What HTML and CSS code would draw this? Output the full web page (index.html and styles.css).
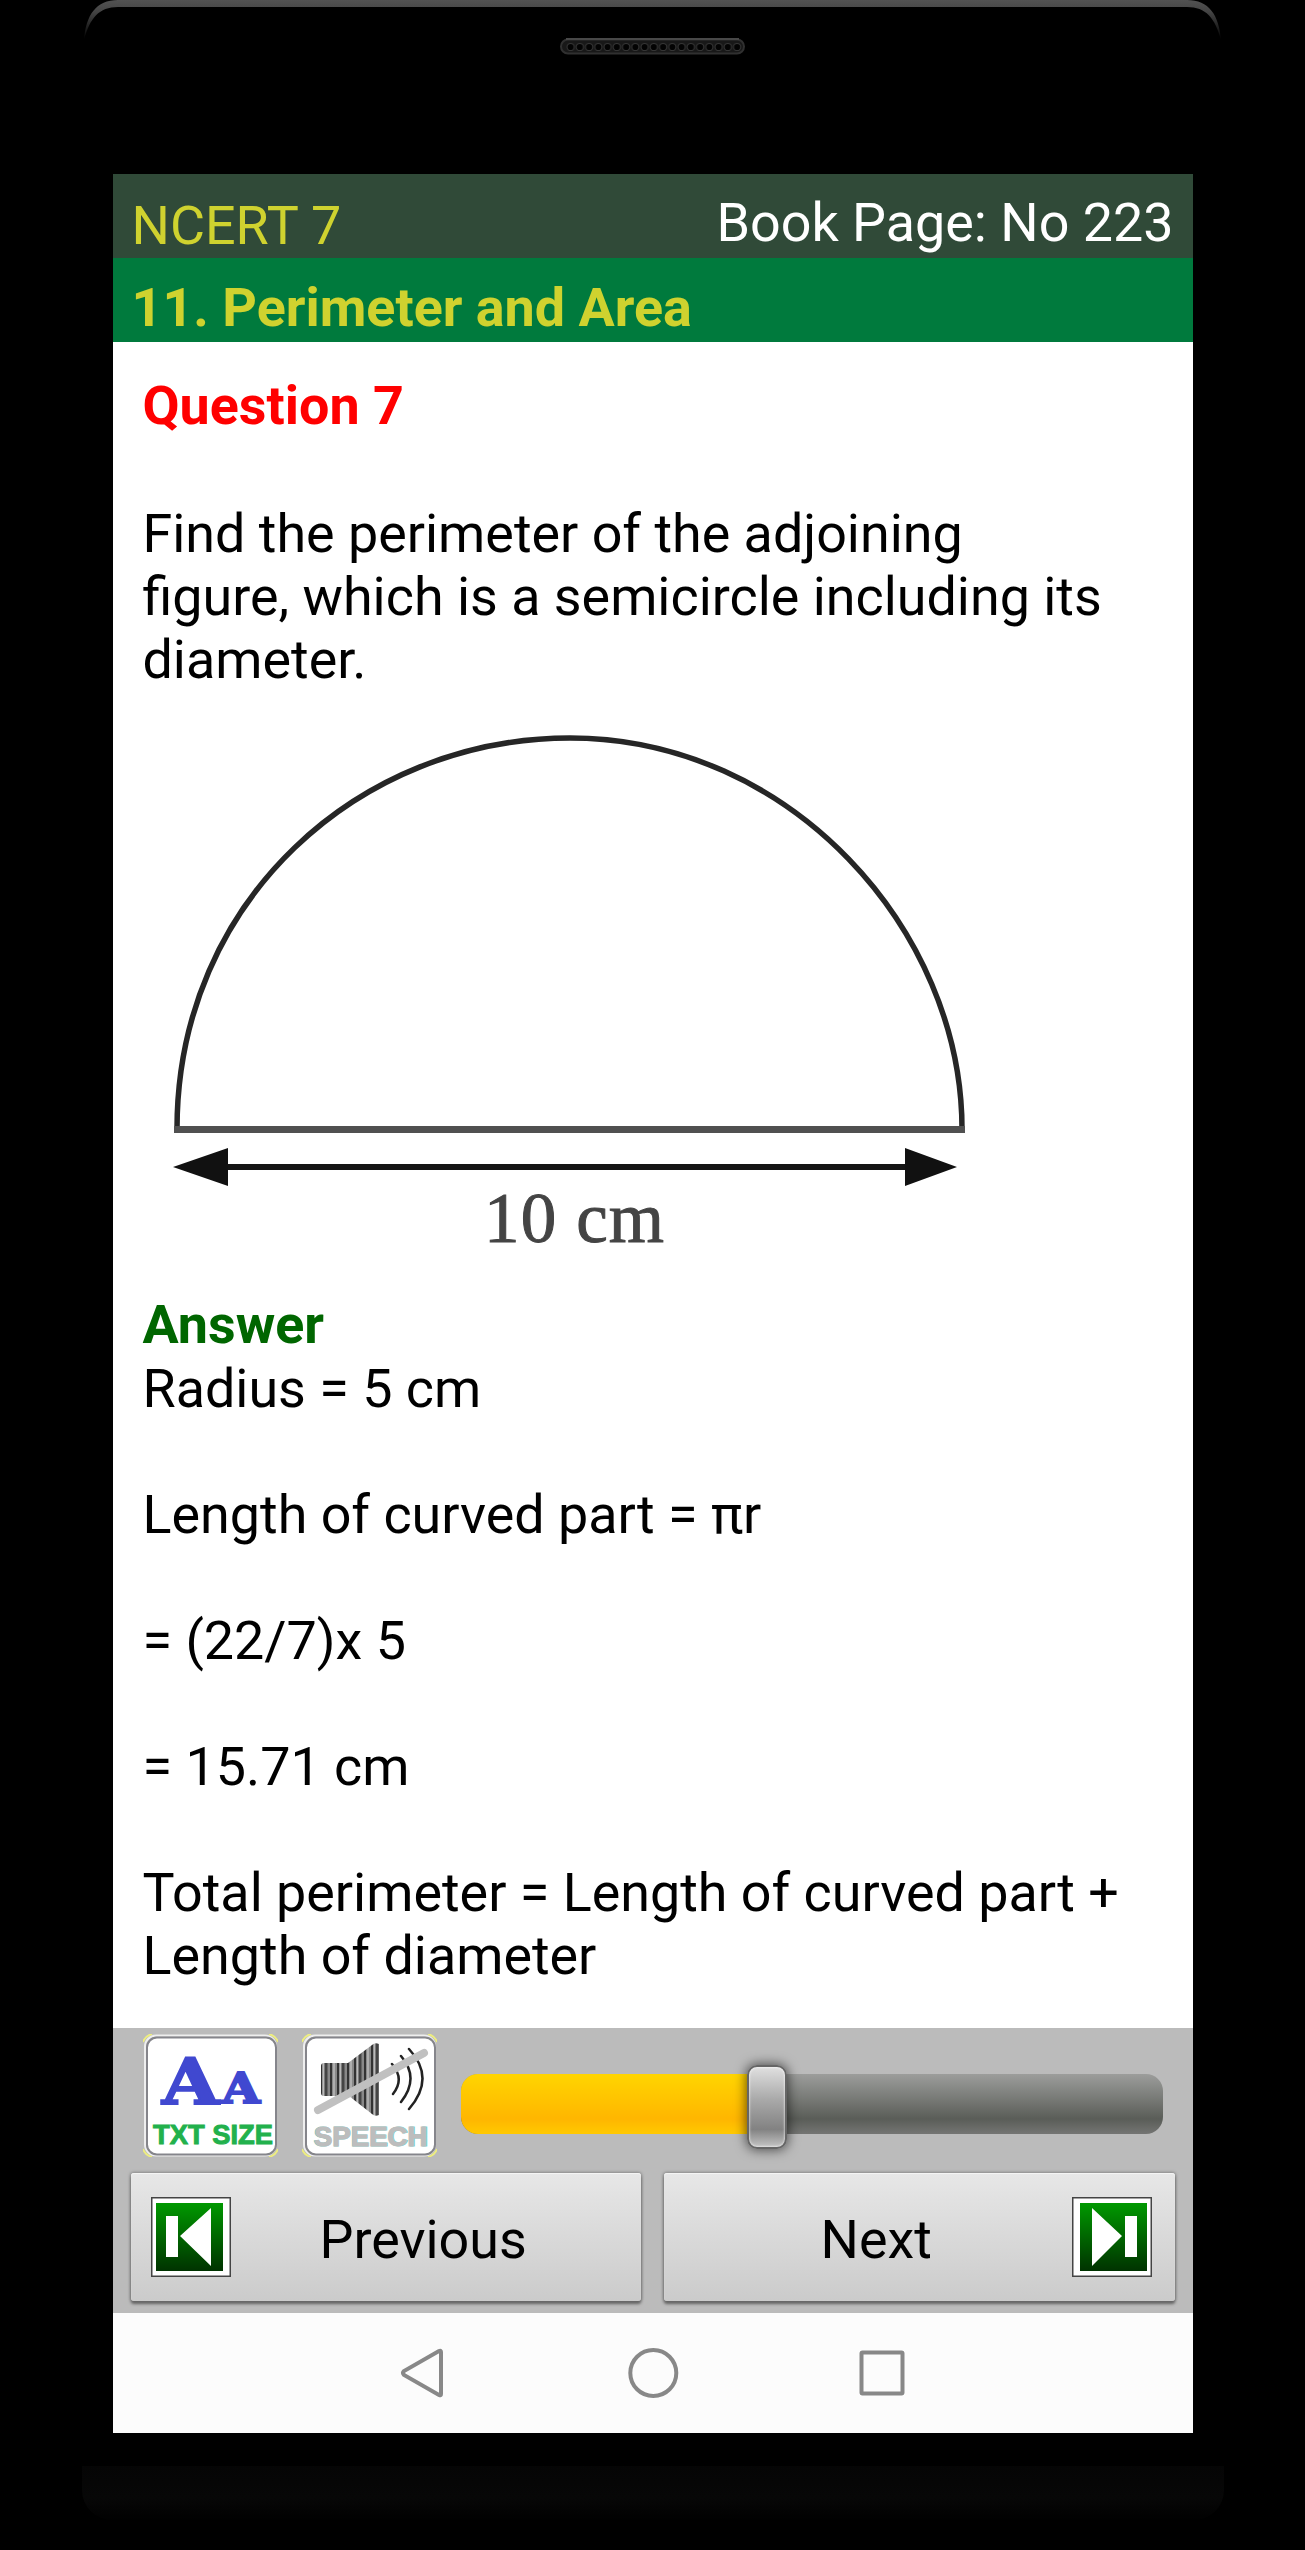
FILE: index.html
```html
<!DOCTYPE html>
<html lang="en">
<head>
<meta charset="utf-8">
<title>NCERT 7</title>
<link rel="stylesheet" href="styles.css">
</head>
<body>
<div class="phone">
  <header class="bezel-top">
    <svg width="1305" height="174" viewBox="0 0 1305 174">
      <defs>
        <linearGradient id="rim" x1="0" y1="0" x2="0" y2="1"><stop offset="0" stop-color="#525252"/><stop offset=".3" stop-color="#444"/><stop offset="1" stop-color="#000"/></linearGradient>
        <pattern id="holes" x="566" y="40" width="9.25" height="16" patternUnits="userSpaceOnUse"><circle cx="4.6" cy="7" r="3.6" fill="#030303" stroke="#353535" stroke-width="1"/></pattern>
      </defs>
      <path d="M84 40C86 15 96 0 118 0H1187C1209 0 1219 15 1221 40C1215 18 1206 7 1187 7H118C99 7 90 18 84 40Z" fill="url(#rim)"/>
      <rect x="561" y="39.500" width="183" height="14" rx="7" fill="#181818" stroke="#303030" stroke-width="2"/>
      <path d="M566 39H739" stroke="#484848" stroke-width="2"/>
      <rect x="566" y="40" width="175.750" height="13" fill="url(#holes)"/>
    </svg>
  </header>
  <main class="screen">
    <div class="title-bar"><span class="title">NCERT 7</span><span class="page-no">Book Page: No 223</span></div>
    <h1 class="chapter"><span>11. Perimeter and Area</span></h1>
    <article class="content">
      <h2 class="question">Question 7</h2>
      <p class="prompt">Find the perimeter of the adjoining<br>figure, which is a semicircle including its<br>diameter.</p>
      <svg class="figure" width="1000" height="603" viewBox="113 691 1000 603">
        <path d="M177 1129C177 900 360 738 570 738C790 738 962 930 962 1129" fill="none" stroke="#262626" stroke-width="5.500"/>
        <path d="M174 1129.500H965" stroke="#505050" stroke-width="7"/>
        <path d="M220 1167H912" stroke="#151515" stroke-width="6"/>
        <path d="M173 1167L228 1148V1186ZM957 1167L905 1148V1186Z" fill="#111"/>
        <text x="484" y="1242" textLength="180" class="measure">10 cm</text>
      </svg>
      <h2 class="answer">Answer</h2>
      <p class="step">Radius = 5 cm</p>
      <p class="step">Length of curved part = πr</p>
      <p class="step">= (22/7)x 5</p>
      <p class="step">= 15.71 cm</p>
      <p class="step last">Total perimeter = Length of curved part +<br>Length of diameter</p>
    </article>
    <footer class="controls">
      <div class="tools">
        <button class="tile" aria-label="Text size">
          <svg width="135" height="123" viewBox="0 0 135 123">
            <path d="M0 8Q2 2 9 0M126 0Q133 2 135 8M0 115Q2 121 9 123M126 123Q133 121 135 115" fill="none" stroke="#eded80" stroke-width="2"/>
            <rect x="2" y="1.500" width="131" height="120" rx="11" fill="none" stroke="#eee" stroke-width="2"/>
            <rect x="4" y="3.500" width="129" height="117" rx="10" fill="#fff" stroke="#85858b" stroke-width="2"/>
            <text x="19" y="70" class="glyph" font-size="63" textLength="57" lengthAdjust="spacingAndGlyphs">A</text>
            <text x="79" y="69" class="glyph" font-size="42" textLength="38" lengthAdjust="spacingAndGlyphs">A</text>
            <text x="10" y="110" class="caption" textLength="120" lengthAdjust="spacingAndGlyphs">TXT SIZE</text>
          </svg>
        </button>
        <button class="tile" aria-label="Speech">
          <svg width="135" height="123" viewBox="0 0 135 123">
            <defs><pattern id="bars" width="17" height="10" patternUnits="userSpaceOnUse"><path d="M0 0H17V10H0Z" fill="#888"/><path d="M2 0V10M12 0V10" stroke="#333" stroke-width="2"/><path d="M7 0V10" stroke="#444" stroke-width="3"/><path d="M4.500 0V10M15 0V10" stroke="#bbb" stroke-width="1.500"/></pattern></defs>
            <path d="M0 8Q2 2 9 0M126 0Q133 2 135 8M0 115Q2 121 9 123M126 123Q133 121 135 115" fill="none" stroke="#eded80" stroke-width="2"/>
            <rect x="2" y="1.500" width="131" height="120" rx="11" fill="none" stroke="#eee" stroke-width="2"/>
            <rect x="4" y="3.500" width="129" height="117" rx="10" fill="#fff" stroke="#85858b" stroke-width="2"/>
            <path d="M19 32Q19 29 22 29H46L70 11Q73 8 77 10V81Q73 83 70 80L47 62H22Q19 62 19 59Z" fill="url(#bars)"/>
            <path d="M90 30Q103 45 91 60M99 22Q118 44 99 68M107 15Q134 44 107 75" fill="none" stroke="#222" stroke-width="2.500" stroke-linecap="round"/>
            <path d="M16 76L122 19" stroke="#c0c0c0" stroke-width="8" stroke-linecap="round"/>
            <text x="11.500" y="112" class="caption cyan" textLength="115" lengthAdjust="spacingAndGlyphs">SPEECH</text>
            <text x="12" y="112" class="caption muted" textLength="113" lengthAdjust="spacingAndGlyphs">SPEECH</text>
          </svg>
        </button>
        <div class="slider"><div class="fill"></div><div class="thumb"></div></div>
      </div>
      <div class="pager">
        <button class="nav-btn prev">
          <svg class="icon" width="80" height="80" viewBox="0 0 80 80"><defs><linearGradient id="green" x1="0" y1="0" x2="0" y2="1"><stop offset="0" stop-color="#009900"/><stop offset="1" stop-color="#003300"/></linearGradient></defs><rect x=".75" y=".75" width="78.500" height="78.500" fill="#fff" stroke="#444" stroke-width="1.500"/><rect x="5" y="6" width="67" height="68" fill="url(#green)"/><path d="M15 19H27V60H15ZM60 11V69L29 39Z" fill="#fff"/></svg>
          <span class="label">Previous</span>
        </button>
        <button class="nav-btn next">
          <span class="label">Next</span>
          <svg class="icon" width="80" height="80" viewBox="0 0 80 80"><rect x=".75" y=".75" width="78.500" height="78.500" fill="#fff" stroke="#444" stroke-width="1.500"/><rect x="8" y="6" width="67" height="68" fill="url(#green)"/><path d="M65 19H53V60H65ZM20 11V69L50 39Z" fill="#fff"/></svg>
        </button>
      </div>
    </footer>
    <nav class="system-nav">
      <svg width="1080" height="120" viewBox="113 2313 1080 120" fill="none" stroke="#888" stroke-width="4">
        <path d="M441 2352V2394Q441 2396 439 2395L404 2375Q402 2373 404 2371L439 2351Q441 2350 441 2352Z"/>
        <circle cx="653.300" cy="2373" r="23"/>
        <rect x="861.500" y="2352.500" width="41" height="41" rx="1"/>
      </svg>
    </nav>
  </main>
  <div class="bezel-bottom"></div>
</div>
</body>
</html>
```
FILE: styles.css
```css
* { box-sizing: border-box; }
body { margin: 0; background: #000; font-family: Roboto, sans-serif; }
svg { display: block; }
button { border: 0; padding: 0; font: inherit; background: none; }
.phone { width: 1305px; height: 2550px; display: flex; flex-direction: column; align-items: center; overflow: hidden; }
.bezel-top { height: 174px; }
.screen { width: 1080px; height: 2259px; display: flex; flex-direction: column; background: #fff; font-size: 53.85px; line-height: 63px; color: #000; }
.title-bar { height: 84px; display: flex; justify-content: space-between; padding: 16px 19px 0; background: #304a38; color: #cfd22f; }
.title { padding-top: 4px; }
.page-no { padding-top: 1px; color: #fff; }
.chapter { margin: 0; height: 84px; padding: 18px 19px 0; background: #007a3d; color: #cfd22f; font-size: 53.85px; font-weight: 700; line-height: 63px; }
.content { height: 1686px; padding: 32px 30px 0; }
.content h2 { margin: 0; font-size: 53.85px; font-weight: 700; line-height: 63px; }
.question { color: #f00; }
.prompt { margin: 65px 0 0; }
.figure { margin-left: -30px; }
.measure { font: 71px "Liberation Serif", serif; fill: #444; stroke: #444; stroke-width: 1; }
.content .answer { color: #060; margin-top: -2px; line-height: 65px; }
.step { margin: 0 0 63px; }
.last { margin: 0; }
.controls { height: 285px; background: #bbb; padding: 6px 18px 0 18px; }
.tools { display: flex; height: 139px; padding-left: 12px; }
.tile { width: 135px; height: 123px; margin-right: 24px; }
.glyph { font-family: "DejaVu Serif", serif; font-weight: 700; fill: #4048d0; stroke: #4048d0; stroke-width: 2; }
.caption { font: 700 28px "Liberation Sans", sans-serif; fill: #22b14c; stroke: #22b14c; stroke-width: 1; }
.cyan { fill: #7cd0c8; stroke: #7cd0c8; }
.muted { fill: #bdbdbd; stroke: #bdbdbd; }
.slider { position: relative; width: 702px; height: 60px; margin-top: 40px; border-radius: 17px; background: linear-gradient(#9c9d9b, #5a5d58 75%, #747573); }
.fill { width: 307px; height: 60px; border-radius: 17px 0 0 17px; background: linear-gradient(#ffd500, #ffb600 75%, #ffc900); }
.thumb { position: absolute; left: 286px; top: -9px; width: 40px; height: 84px; border: 2px solid #666; border-radius: 10px; background: linear-gradient(#e0e0e0, #aaa 40%, #828282 78%, #c4c4c4); box-shadow: 0 0 12px 1px rgba(0,0,0,.6), inset 0 0 2px 1px rgba(255,255,255,.5); }
.pager { display: grid; grid-template-columns: 510px 511px; gap: 23px; }
.nav-btn { display: flex; align-items: center; height: 128px; border-radius: 3px; background: linear-gradient(#e7e7e7, #cbcbcb); box-shadow: 0 3px 3px #666, 0 0 3px 1px #888, inset 0 1px 1px #f5f5f5; }
.prev { padding-left: 20px; }
.prev .label { margin-left: 89px; }
.next { padding-left: 157px; }
.next .icon { margin-left: auto; margin-right: 23px; }
.label { padding-top: 5px; }
.system-nav { height: 120px; background: #fcfcfc; }
.bezel-bottom { width: 1142px; height: 54px; margin-top: 33px; border-radius: 0 0 30px 30px; background: linear-gradient(#050505, #070707 60%, #010101); }
```
